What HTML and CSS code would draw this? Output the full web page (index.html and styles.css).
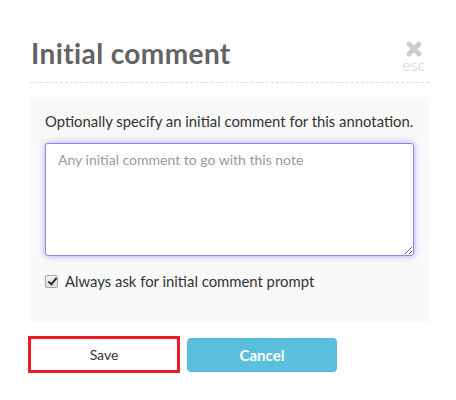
FILE: index.html
```html
<!DOCTYPE html>
<html>
<head>
<meta charset="utf-8">
<link rel="stylesheet" href="styles.css">
</head>
<body>
<div class="modal">
  <div class="modal-header">
    <h1 class="title">Initial comment</h1>
    <div class="close">
      <svg class="close-icon" width="16" height="16" viewBox="0 0 16 16">
        <path d="M3 3 L13 13 M13 3 L3 13" stroke="#cccccc" stroke-width="4.6" stroke-linecap="round" fill="none"/>
      </svg>
      <span class="esc">esc</span>
    </div>
  </div>
  <div class="panel">
    <p class="hint">Optionally specify an initial comment for this annotation.</p>
    <textarea class="comment" placeholder="Any initial comment to go with this note"></textarea>
    <label class="check-row"><input type="checkbox" class="check" checked> Always ask for initial comment prompt</label>
  </div>
  <div class="actions">
    <button class="btn btn-save">Save</button>
    <button class="btn btn-cancel">Cancel</button>
  </div>
</div>
</body>
</html>
```

FILE: styles.css
```css
html, body {
  margin: 0;
  padding: 0;
  background: #ffffff;
}
body {
  font-family: Lato, "Liberation Sans", sans-serif;
  color: #333333;
}
.modal {
  padding: 38px 27px 0 30px;
}
.modal-header {
  display: flex;
  justify-content: space-between;
  align-items: flex-start;
  padding-bottom: 9px;
  border-bottom: 1px dashed #dddddd;
}
.title {
  margin: 0 0 0 1px;
  font-family: Lato, "Liberation Sans", sans-serif;
  font-weight: 700;
  font-size: 28px;
  line-height: 30px;
  color: #636363;
  letter-spacing: 0.4px;
}
.close {
  display: flex;
  flex-direction: column;
  align-items: center;
  margin-top: 3px;
  margin-right: 4px;
}
.close-icon {
  display: block;
}
.esc {
  display: block;
  font-family: Lato, "Liberation Sans", sans-serif;
  font-weight: 300;
  font-size: 16px;
  line-height: 16px;
  color: #cccccc;
}
.panel {
  margin-top: 14px;
  background: #f9f9f9;
  border-radius: 3px;
  padding: 14px 15px 31px 15px;
}
.hint {
  margin: 0;
  font-size: 14.85px;
  line-height: 20px;
  white-space: nowrap;
  color: #333333;
}
.comment {
  display: block;
  box-sizing: border-box;
  width: 100%;
  height: 113px;
  margin-top: 12px;
  padding: 6px 12px 3px 12px;
  font-family: Lato, "Liberation Sans", sans-serif;
  font-size: 14px;
  line-height: 20px;
  color: #333333;
  background: #ffffff;
  border: 1.5px solid #9b7ff5;
  border-radius: 3px;
  box-shadow: 0 0 7px rgba(140, 100, 250, 0.6);
  outline: none;
  resize: vertical;
}
.comment::placeholder {
  color: #999999;
}
.check-row {
  display: flex;
  align-items: center;
  margin-top: 15px;
  font-size: 14.85px;
  line-height: 20px;
  color: #333333;
}
.check {
  appearance: none;
  -webkit-appearance: none;
  position: relative;
  box-sizing: border-box;
  width: 13px;
  height: 13px;
  margin: 0 7px 0 0;
  background: linear-gradient(#f4f4f4, #dedede);
  border: 1px solid #a9a9a9;
  border-radius: 2px;
}
.check:checked::after {
  content: "";
  position: absolute;
  left: 3.5px;
  top: 0.5px;
  width: 3px;
  height: 7px;
  border: solid #333333;
  border-width: 0 2px 2px 0;
  transform: rotate(40deg);
}
.actions {
  display: flex;
  align-items: center;
  margin-top: 14px;
  margin-left: -2px;
}
.btn {
  box-sizing: border-box;
  font-family: Lato, "Liberation Sans", sans-serif;
  cursor: pointer;
}
.btn-save {
  width: 152px;
  height: 37px;
  background: #ffffff;
  border: 3px solid #ed1c24;
  font-size: 14px;
  color: #333333;
  padding: 0;
}
.btn-cancel {
  width: 150px;
  height: 34px;
  margin-left: 7px;
  margin-top: 1px;
  background: #5bc0de;
  border: 1px solid #55b8d6;
  border-radius: 4px;
  font-size: 15px;
  font-weight: 700;
  color: #ffffff;
  padding: 0;
}
```
